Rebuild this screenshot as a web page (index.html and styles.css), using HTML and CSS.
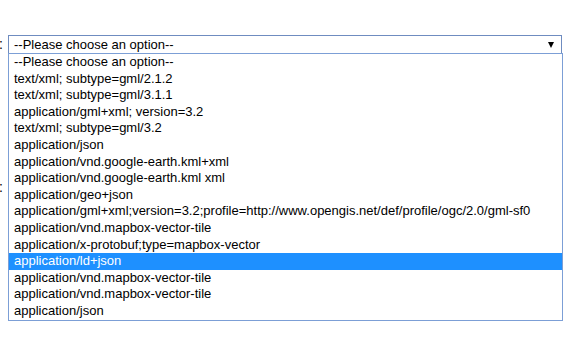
FILE: index.html
```html
<!DOCTYPE html>
<html lang="en">
<head>
    <meta charset="UTF-8">
    <meta name="viewport" content="width=device-width, initial-scale=1.0">
    <title>Output format</title>
    <link rel="stylesheet" href="styles.css">
</head>
<body>

    <form class="form" action="#" method="get">
        <div class="row">
            <label class="label" for="format">:</label>
            <div class="select" id="format">
                <span class="value">--Please choose an option--</span>
                <span class="arrow"></span>

                <ul class="options">
                    <li>--Please choose an option--</li>
                    <li>text/xml; subtype=gml/2.1.2</li>
                    <li>text/xml; subtype=gml/3.1.1</li>
                    <li>application/gml+xml; version=3.2</li>
                    <li>text/xml; subtype=gml/3.2</li>
                    <li>application/json</li>
                    <li>application/vnd.google-earth.kml+xml</li>
                    <li>application/vnd.google-earth.kml xml</li>
                    <li>application/geo+json</li>
                    <li>application/gml+xml;version=3.2;profile=http://www.opengis.net/def/profile/ogc/2.0/gml-sf0</li>
                    <li>application/vnd.mapbox-vector-tile</li>
                    <li>application/x-protobuf;type=mapbox-vector</li>
                    <li class="selected">application/ld+json</li>
                    <li>application/vnd.mapbox-vector-tile</li>
                    <li>application/vnd.mapbox-vector-tile</li>
                    <li>application/json</li>
                </ul>
            </div>
        </div>

        <div class="row row-second">
            <label class="label" for="crs">:</label>
        </div>
    </form>

</body>
</html>
```

FILE: styles.css
```css
html,
body {
    min-height: 100vh;
}
body {
    margin: 0;
    font-family: "Liberation Sans", Arial, sans-serif;
    font-size: 13px;
    color: #000;
    background: #fff;
}
.form {
    padding-top: 35px;
    min-height: 316px;
}
.row {
    display: flex;
    align-items: center;
}
.row-second {
    margin-top: 124px;
}
.label {
    width: 9px;
    margin-left: -1px;
    line-height: 19px;
    font-size: 14px;
}
.select {
    position: relative;
    width: 547px;
    height: 17px;
    border: 1px solid #6f8cc0;
    display: flex;
    align-items: center;
    padding-left: 5px;
}
.value {
    flex: 1;
    line-height: 17px;
}
.arrow {
    width: 0;
    height: 0;
    border-left: 3.5px solid transparent;
    border-right: 3.5px solid transparent;
    border-top: 6px solid #000;
    margin-right: 7px;
}
.options {
    position: absolute; /* dropdown lies over the page */
    top: 17px;
    left: -1px;
    width: 553px;
    margin: 0;
    padding: 0;
    list-style: none;
    border: 1px solid #7c9fd6;
    background: #fff;
    z-index: 1;
}
.options li {
    height: 16.6px;
    line-height: 16.6px;
    padding-left: 5px;
    white-space: nowrap;
}
.options .selected {
    background: #1e90ff;
    color: #fff;
}
```
